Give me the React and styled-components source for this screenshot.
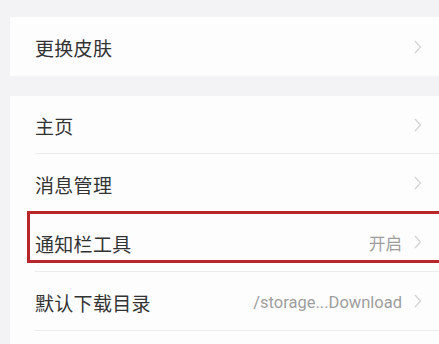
import React from "react";
import styled, { createGlobalStyle } from "styled-components";

const GlobalStyle = createGlobalStyle`
  html, body {
    margin: 0;
    padding: 0;
    background: #f3f3f6;
    font-family: "Noto Sans CJK SC", "Noto Sans", sans-serif;
  }
`

const Page = styled.div`
  width: 439px;
  height: 344px;
  overflow: hidden;
  padding: 17px 0 0 10px;
  box-sizing: border-box;
  background: #f3f3f6;
`

const Card = styled.div`
  background: #fdfdfe;
  margin-bottom: 20px;
`

const Row = styled.div`
  position: relative;
  display: flex;
  align-items: center;
  height: ${(p) => p.$height || 58}px;
  margin-left: 25px;
  padding-right: 17px;
  border-bottom: ${(p) => (p.$divider ? "1px solid #ececef" : "none")};
`

const Label = styled.div`
  flex: 1;
  color: #333333;
  font-size: 19px;
  padding-top: 2px;
  letter-spacing: 0.3px;
`

const Value = styled.div`
  color: #9d9d9d;
  font-size: 16.5px;
  font-family: Roboto, "Noto Sans CJK SC", sans-serif;
  margin-right: 12px;
  padding-top: 2px;
`

const Highlight = styled.div`
  position: absolute;
  left: -8px;
  right: -13px;
  top: -2px;
  bottom: 8px;
  border: 3px solid #b8252b;
  pointer-events: none;
`

const Chevron = () => (
  <svg width="8" height="14" viewBox="0 0 8 14">
    <path d="M1 1 L6.5 7 L1 13" fill="none" stroke="#d2d2d4" strokeWidth="1.2" />
  </svg>
)

const Item = ({ label, value, divider, highlight, height }) => (
  <Row $divider={divider} $height={height}>
    <Label>{label}</Label>
    {value && <Value>{value}</Value>}
    <Chevron />
    {highlight && <Highlight />}
  </Row>
)

const App = () => {
  return (
    <Page>
      <GlobalStyle />
      <Card>
        <Item label="更换皮肤" height={59} />
      </Card>
      <Card>
        <Item label="主页" divider height={57} />
        <Item label="消息管理" divider height={58} />
        <Item label="通知栏工具" value="开启" divider highlight height={58} />
        <Item label="默认下载目录" value="/storage...Download" divider height={58} />
        <Row $height={20} />
      </Card>
    </Page>
  )
}

export default App;
